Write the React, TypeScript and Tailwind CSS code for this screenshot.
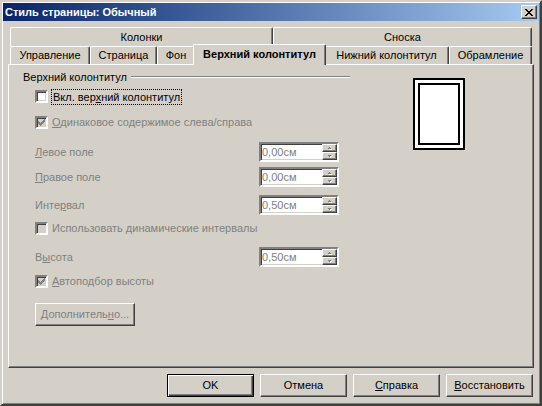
import React from "react";

const CHECK_ROWS = ["......#", ".....##", "#...###", "##.###.", "#####..", ".###...", "..#...."];
const CLOSE_ROWS = ["##....##", ".##..##.", "..####..", "...##...", "..####..", ".##..##.", "##....##"];

function PixelGlyph({ rows, color, shadow }: { rows: string[]; color: string; shadow?: string }) {
  const w = rows[0].length;
  const h = rows.length;
  const cells: { x: number; y: number }[] = [];
  rows.forEach((r, y) => r.split("").forEach((c, x) => c === "#" && cells.push({ x, y })));
  return (
    <svg width={w + (shadow ? 1 : 0)} height={h + (shadow ? 1 : 0)} shapeRendering="crispEdges" className="block">
      {shadow && cells.map((p, i) => <rect key={"s" + i} x={p.x + 1} y={p.y + 1} width={1} height={1} fill={shadow} />)}
      {cells.map((p, i) => (
        <rect key={i} x={p.x} y={p.y} width={1} height={1} fill={color} />
      ))}
    </svg>
  );
}

function CheckBox({ checked, disabled, children }: { checked?: boolean; disabled?: boolean; children: React.ReactNode }) {
  return (
    <div className="ml-[12px] flex h-[17px] items-center">
      <div
        className={
          "flex h-[13px] w-[13px] items-center justify-center border-2 border-t-[#808080] border-l-[#808080] border-r-white border-b-white shadow-[inset_1px_1px_0_#404040,inset_-1px_-1px_0_#d4d0c8] " +
          (disabled ? "bg-[#d4d0c8]" : "bg-white")
        }
      >
        {checked && <PixelGlyph rows={CHECK_ROWS} color={disabled ? "#808080" : "#000000"} />}
      </div>
      {children}
    </div>
  );
}

function Arrow({ up }: { up: boolean }) {
  return <PixelGlyph rows={up ? [".#.", "###"] : ["###", ".#."]} color="#808080" shadow="#ffffff" />;
}

function SpinField({ value, label }: { value: string; label: React.ReactNode }) {
  return (
    <div className="ml-[12px] flex h-[20px] items-center">
      <div className="w-[224px] text-[#808080]">{label}</div>
      <div className="flex h-[20px] w-[80px] border-2 border-t-[#808080] border-l-[#808080] border-r-white border-b-white bg-white shadow-[inset_1px_1px_0_#404040,inset_-1px_-1px_0_#d4d0c8]">
        <div className="flex flex-1 items-center pl-[1px] text-[#808080]">{value}</div>
        <div className="flex w-[15px] flex-col">
          <div className="flex h-[8px] items-center justify-center border border-t-white border-l-white border-r-[#404040] border-b-[#404040] bg-[#d4d0c8] shadow-[inset_-1px_-1px_0_#808080]">
            <Arrow up />
          </div>
          <div className="flex h-[8px] items-center justify-center border border-t-white border-l-white border-r-[#404040] border-b-[#404040] bg-[#d4d0c8] shadow-[inset_-1px_-1px_0_#808080]">
            <Arrow up={false} />
          </div>
        </div>
      </div>
    </div>
  );
}

function Tab({ width, children, grow }: { width?: number; children: React.ReactNode; grow?: boolean }) {
  return (
    <div
      style={width ? { width } : undefined}
      className={
        "flex h-full shrink-0 items-center justify-center rounded-t-[2px] border-t border-l border-r border-t-white border-l-white border-r-[#404040] bg-[#d4d0c8] shadow-[inset_-1px_0_0_#808080] " +
        (grow ? "flex-1" : "")
      }
    >
      {children}
    </div>
  );
}

function PushButton({ children, isDefault }: { children: React.ReactNode; isDefault?: boolean }) {
  return (
    <div
      className={
        "flex h-[23px] w-[87px] items-center justify-center " +
        (isDefault
          ? "border border-black shadow-[inset_1px_1px_0_#fff,inset_-1px_-1px_0_#404040,inset_-2px_-2px_0_#808080]"
          : "border border-t-white border-l-white border-r-[#404040] border-b-[#404040] shadow-[inset_-1px_-1px_0_#808080]")
      }
    >
      {children}
    </div>
  );
}

export default function App() {
  return (
    <div className="flex h-[406px] w-[542px] flex-col border-2 border-t-[#d4d0c8] border-l-[#d4d0c8] border-r-[#404040] border-b-[#404040] bg-[#d4d0c8] p-[1px] font-['Liberation_Sans',Arial,sans-serif] text-[11px] leading-[13px] text-black shadow-[inset_1px_1px_0_#fff,inset_-1px_-1px_0_#808080]">
      {/* caption */}
      <div className="flex h-[18px] shrink-0 items-center justify-between bg-linear-to-r from-[#0a246a] to-[#a6caf0] pl-[2px] pr-[2px]">
        <span className="font-bold text-white">Стиль страницы: Обычный</span>
        <div className="flex h-[14px] w-[16px] items-center justify-center border border-t-white border-l-white border-r-[#404040] border-b-[#404040] bg-[#d4d0c8] shadow-[inset_-1px_-1px_0_#808080]">
          <PixelGlyph rows={CLOSE_ROWS} color="#000000" />
        </div>
      </div>

      {/* body */}
      <div className="flex flex-1 flex-col px-[5px] pt-[6px] pb-[6px]">
        {/* tab strip */}
        <div className="flex shrink-0 flex-col px-[2px]">
          <div className="flex h-[19px]">
            <Tab width={263}>Колонки</Tab>
            <Tab grow>Сноска</Tab>
          </div>
          <div className="flex h-[18px] items-end">
            <Tab width={80}>Управление</Tab>
            <Tab width={67}>Страница</Tab>
            <Tab width={38}>Фон</Tab>
            <div className="relative z-10 -mx-[2px] mb-[-1px] flex h-[21px] w-[133px] shrink-0 items-center justify-center rounded-t-[2px] border-t border-l border-r border-t-white border-l-white border-r-[#404040] bg-[#d4d0c8] pb-[2px] font-bold shadow-[inset_-1px_0_0_#808080]">
              Верхний колонтитул
            </div>
            <Tab width={125}>Нижний колонтитул</Tab>
            <Tab grow>Обрамление</Tab>
          </div>
        </div>

        {/* page */}
        <div className="flex flex-1 border border-t-white border-l-white border-r-[#404040] border-b-[#404040] shadow-[inset_-1px_-1px_0_#808080]">
          <div className="flex w-[341px] flex-col pt-[5px] pl-[14px]">
            <div className="flex h-[14px] items-center">
              <span>Верхний колонтитул</span>
              <div className="ml-[4px] h-[2px] flex-1 border-t border-t-[#808080] border-b border-b-white" />
            </div>

            <div className="mt-[4px]">
              <CheckBox>
                <span className="ml-[3px] border border-dotted border-black px-[1px] leading-[14px]">
                  Вкл. вер<u>х</u>ний колонтитул
                </span>
              </CheckBox>
            </div>
            <div className="mt-[9px]">
              <CheckBox checked disabled>
                <span className="ml-[4px] text-[#808080]">
                  <u>О</u>динаковое содержимое слева/справа
                </span>
              </CheckBox>
            </div>

            <div className="mt-[11px]">
              <SpinField value="0,00см" label={<><u>Л</u>евое поле</>} />
            </div>
            <div className="mt-[5px]">
              <SpinField value="0,00см" label={<><u>П</u>равое поле</>} />
            </div>
            <div className="mt-[8px]">
              <SpinField value="0,50см" label={<>Инте<u>р</u>вал</>} />
            </div>

            <div className="mt-[5px]">
              <CheckBox disabled>
                <span className="ml-[4px] text-[#808080]">
                  Использовать <u>д</u>инамические интервалы
                </span>
              </CheckBox>
            </div>

            <div className="mt-[10px]">
              <SpinField value="0,50см" label={<>В<u>ы</u>сота</>} />
            </div>

            <div className="mt-[6px]">
              <CheckBox checked disabled>
                <span className="ml-[4px] text-[#808080]">
                  <u>А</u>втоподбор высоты
                </span>
              </CheckBox>
            </div>

            <div className="mt-[13px] ml-[12px] flex h-[23px] w-[100px] items-center justify-center border border-t-white border-l-white border-r-[#404040] border-b-[#404040] text-[#808080] shadow-[inset_-1px_-1px_0_#808080]">
              Дополнитель<u>н</u>о...
            </div>
          </div>

          {/* page preview */}
          <div className="mt-[13px] ml-[63px] flex h-[72px] w-[52px] border-2 border-black bg-white p-[3px]">
            <div className="flex-1 border-2 border-black" />
          </div>
        </div>

        {/* buttons */}
        <div className="mt-[6px] mr-[1px] flex shrink-0 justify-end gap-[6px]">
          <PushButton isDefault>OK</PushButton>
          <PushButton>Отмена</PushButton>
          <PushButton>
            <span>
              <u>С</u>правка
            </span>
          </PushButton>
          <PushButton>
            <span>
              <u>В</u>осстановить
            </span>
          </PushButton>
        </div>
      </div>
    </div>
  );
}
